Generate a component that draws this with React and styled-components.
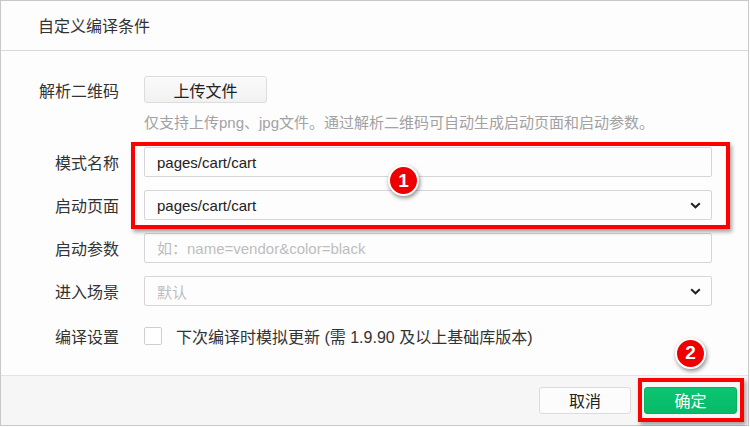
import React from "react";
import styled, { createGlobalStyle } from "styled-components";

const GlobalStyle = createGlobalStyle`
  html, body {
    margin: 0;
    padding: 0;
    background: #ffffff;
  }
  body {
    font-family: "Liberation Sans", "Noto Sans CJK SC", sans-serif;
    color: #333;
  }
  * { box-sizing: border-box; }
`;

const Dialog = styled.div`
  width: 749px;
  height: 426px;
  border: 1px solid #c8c8c8;
  background: #fdfdfd;
  display: flex;
  flex-direction: column;
`;

const Header = styled.div`
  height: 50px;
  flex: none;
  display: flex;
  align-items: center;
  padding: 0 37px 2px;
  border-bottom: 1px solid #d9d9d9;
  font-size: 16px;
  color: #333;
`;

const Body = styled.div`
  flex: 1;
  padding: 25px 36px 0 38px;
  display: flex;
  flex-direction: column;
`;

const Row = styled.div`
  display: flex;
  align-items: center;
  height: ${(p) => p.$h || 30}px;
  margin-top: ${(p) => p.$mt || 0}px;
  margin-bottom: ${(p) => p.$mb ?? 13}px;
`;

const Label = styled.div`
  width: 80px;
  flex: none;
  margin-right: 25px;
  text-align: right;
  font-size: 16px;
  color: #333;
`;

const Field = styled.div`
  flex: 1;
  align-self: stretch;
  display: flex;
  align-items: center;
  min-width: 0;
`;

const UploadButton = styled.button`
  width: 123px;
  height: 27px;
  border: 1px solid #dcdcdc;
  border-radius: 3px;
  background: linear-gradient(#fbfbfb, #f1f1f1);
  font-family: inherit;
  font-size: 16px;
  color: #222;
  padding: 0;
`;

const Hint = styled.div`
  margin: 10px 0 14px 105px;
  font-size: 15px;
  color: #a2a2a2;
  line-height: 20px;
`;

const Input = styled.input`
  width: 100%;
  height: 100%;
  border: 1px solid #d6d6d6;
  border-radius: 2px;
  background: #fdfdfd;
  padding: 0 12px;
  font-family: inherit;
  font-size: 15px;
  color: #222;
  outline: none;
  &::placeholder {
    color: #bdbdbd;
    font-size: 15px;
  }
`;

const Select = styled.div`
  width: 100%;
  height: 100%;
  border: 1px solid #d6d6d6;
  border-radius: 2px;
  background: #fdfdfd;
  padding: 0 10px 0 12px;
  display: flex;
  align-items: center;
  justify-content: space-between;
  font-size: 15px;
  color: ${(p) => (p.$muted ? "#bdbdbd" : "#222")};
`;

const Highlight = styled.div`
  position: relative;
  &::after {
    content: "";
    position: absolute;
    left: 92px;
    right: -18px;
    top: -5px;
    bottom: 4px;
    border: 4px solid #ff0000;
    box-shadow: 2px 3px 4px rgba(0, 0, 0, 0.35);
    pointer-events: none;
  }
`;

const Badge = styled.div`
  position: absolute;
  left: ${(p) => p.$left};
  top: ${(p) => p.$top}px;
  width: 31px;
  height: 31px;
  border-radius: 50%;
  background: #ee0000;
  border: 2px solid #ffffff;
  box-shadow: 1px 2px 4px rgba(0, 0, 0, 0.45);
  color: #fff;
  font-family: "Liberation Sans", Arial, sans-serif;
  font-weight: bold;
  font-size: 19px;
  display: flex;
  align-items: center;
  justify-content: center;
  z-index: 2;
`;

const CheckRow = styled.label`
  display: flex;
  align-items: center;
  gap: 14px;
  font-size: 16px;
  color: #333;
`;

const Box = styled.span`
  width: 18px;
  height: 18px;
  border: 1px solid #cfcfcf;
  border-radius: 2px;
  background: #fff;
  flex: none;
`;

const Footer = styled.div`
  height: 50px;
  flex: none;
  border-top: 1px solid #e3e3e3;
  background: #f6f6f6;
  display: flex;
  align-items: center;
  justify-content: flex-end;
  gap: 13px;
  padding: 0 11px 1px 0;
`;

const Button = styled.button`
  position: relative;
  width: ${(p) => (p.$primary ? 93 : 92)}px;
  height: 27px;
  border-radius: 3px;
  border: 1px solid ${(p) => (p.$primary ? "#06b45e" : "#dcdcdc")};
  background: ${(p) => (p.$primary ? "linear-gradient(#0cc472, #07bb68)" : "#fcfcfc")};
  color: ${(p) => (p.$primary ? "#ffffff" : "#222")};
  font-family: inherit;
  font-size: 16px;
  padding: 0;
  ${(p) =>
    p.$marked &&
    `
    &::after {
      content: "";
      position: absolute;
      left: -7px;
      right: -8px;
      top: -10px;
      bottom: -9px;
      border: 4px solid #ff0000;
      box-shadow: 2px 3px 4px rgba(0, 0, 0, 0.35);
    }
  `}
`;

const Chevron = () => (
  <svg width="11" height="7" viewBox="0 0 11 7">
    <path d="M1.2 1.2 L5.5 5.3 L9.8 1.2" fill="none" stroke="#222" strokeWidth="2" />
  </svg>
);

const App = () => {
  return (
    <>
      <GlobalStyle />
      <Dialog>
        <Header>自定义编译条件</Header>
        <Body>
          <Row $h={27} $mb={0}>
            <Label>解析二维码</Label>
            <Field>
              <UploadButton>上传文件</UploadButton>
            </Field>
          </Row>
          <Hint>仅支持上传png、jpg文件。通过解析二维码可自动生成启动页面和启动参数。</Hint>
          <Highlight>
            <Row>
              <Label>模式名称</Label>
              <Field>
                <Input readOnly value="pages/cart/cart" />
              </Field>
            </Row>
            <Row>
              <Label>启动页面</Label>
              <Field>
                <Select>
                  pages/cart/cart
                  <Chevron />
                </Select>
              </Field>
            </Row>
            <Badge $left="349px" $top={18}>1</Badge>
          </Highlight>
          <Row>
            <Label>启动参数</Label>
            <Field>
              <Input readOnly placeholder="如：name=vendor&color=black" />
            </Field>
          </Row>
          <Row $mb={0}>
            <Label>进入场景</Label>
            <Field>
              <Select $muted>
                默认
                <Chevron />
              </Select>
            </Field>
          </Row>
          <Row $mb={0} $mt={15}>
            <Label>编译设置</Label>
            <Field>
              <CheckRow>
                <Box />
                下次编译时模拟更新 (需 1.9.90 及以上基础库版本)
              </CheckRow>
            </Field>
          </Row>
        </Body>
        <Footer>
          <Button>取消</Button>
          <Button $primary $marked>
            确定
            <Badge $left="calc(50% - 15.5px)" $top={-50}>2</Badge>
          </Button>
        </Footer>
      </Dialog>
    </>
  );
};

export default App;
